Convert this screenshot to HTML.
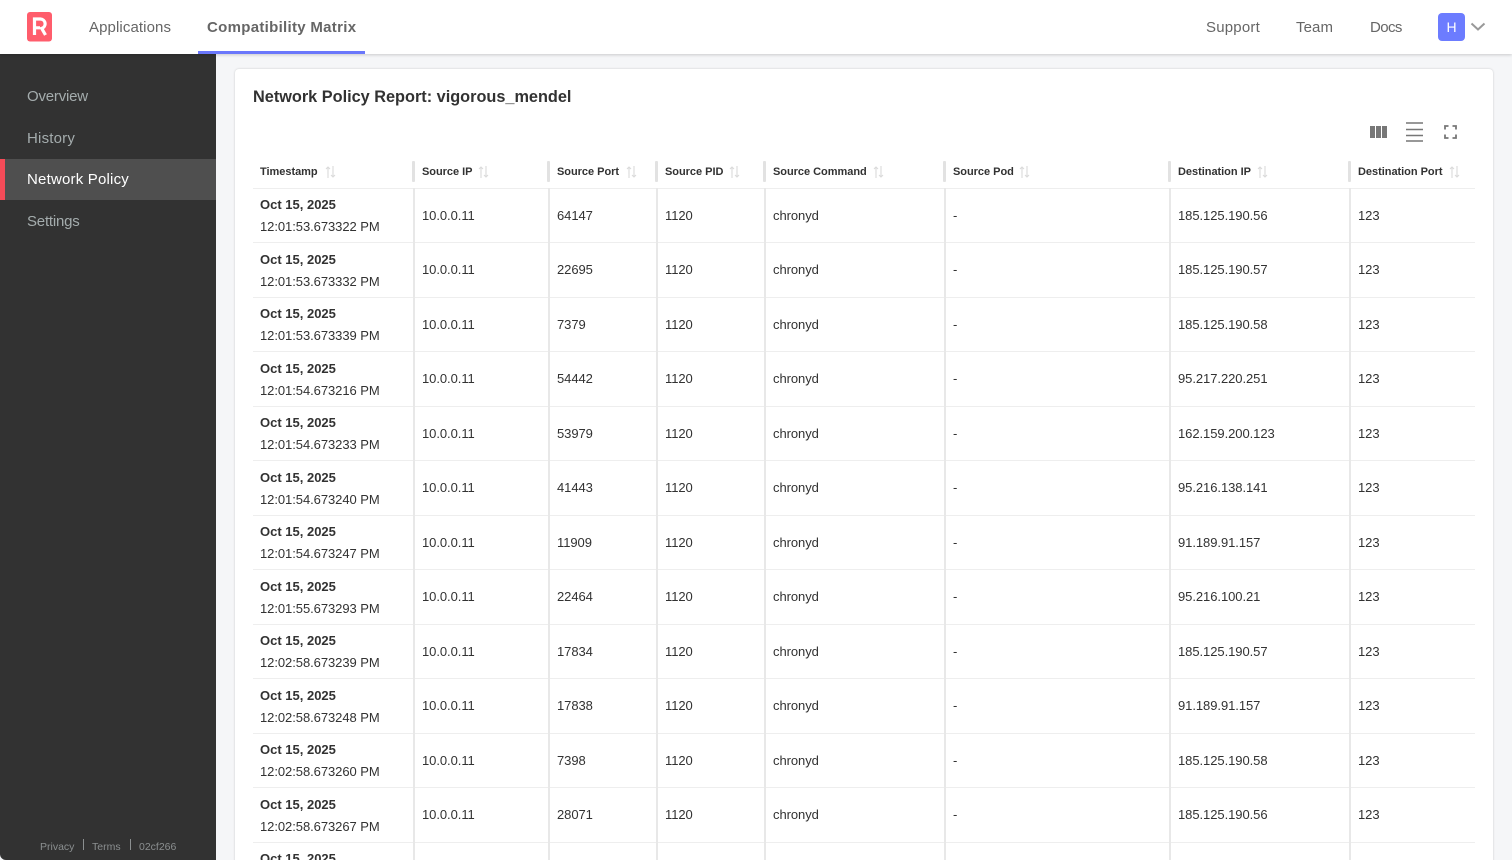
<!DOCTYPE html>
<html><head><meta charset="utf-8"><title>Network Policy</title>
<style>
*{box-sizing:border-box}
html,body{margin:0;padding:0;width:1512px;height:860px;overflow:hidden;background:#f5f6f8;font-family:"Liberation Sans",sans-serif;color:#323232}
#wrap{position:absolute;left:0;top:0;width:1512px;height:860px;overflow:hidden;background:#f5f6f8}
.a{position:absolute;white-space:nowrap}
#top{position:absolute;left:0;top:0;width:1512px;height:54px;background:#fff;box-shadow:0 1px 3px rgba(0,0,0,.18);z-index:5}
.n{position:absolute;top:18px;font-size:15px;line-height:20px;color:#666;white-space:nowrap}
#side{position:absolute;left:0;top:54px;width:216px;height:806px;background:#323232;border-bottom-left-radius:6px}
.s{position:absolute;left:27px;font-size:15px;line-height:20px;color:#a4acad}
#card{position:absolute;left:235px;top:69px;width:1258px;height:830px;background:#fff;border-radius:4px;box-shadow:0 0 2px rgba(0,0,0,.18)}
.h{position:absolute;top:166px;font-size:11px;line-height:13px;font-weight:bold;color:#323232;white-space:nowrap;letter-spacing:-.03px}
.gr{position:absolute;top:161px;width:3px;height:21px;background:#e2e2e2;border-radius:1px}
.r{position:absolute;left:253px;width:1222px;height:55px;border-bottom:1px solid #eeeeee}
.r span{position:absolute;top:19.75px;font-size:13px;line-height:15px;white-space:nowrap;color:#323232;letter-spacing:-.06px}
.r span.d{left:7px;top:9px;font-weight:bold;letter-spacing:0}
.r span.t{left:7px;top:31px}
.c2{left:169px}.c3{left:304px}.c4{left:412px}.c5{left:520px}.c6{left:700px}.c7{left:925px}.c8{left:1105px}
.v{position:absolute;top:188px;width:2px;height:672px;background:#e8e8e8}
.ic{position:absolute;top:166px}
</style></head><body>
<div id="wrap">
<div id="top">
<svg class="a" style="left:27px;top:12px" width="26" height="30" viewBox="0 0 26 30"><rect width="25" height="29.5" rx="3" fill="#ff5d6c"/><path d="M7.5 23V7h6a4.8 4.8 0 0 1 1.2 9.4L18.500 23M7.500 15.800h5.500" fill="none" stroke="#fff" stroke-width="3.200"/></svg>
<div class="n" style="left:89px;letter-spacing:.1px">Applications</div>
<div class="n" style="left:207px;font-weight:bold;letter-spacing:.3px">Compatibility Matrix</div>
<div class="a" style="left:198px;top:51px;width:167px;height:3px;background:#6a77fb"></div>
<div class="n" style="left:1206px;letter-spacing:.2px">Support</div>
<div class="n" style="left:1296px;letter-spacing:.1px">Team</div>
<div class="n" style="left:1370px;letter-spacing:-.6px">Docs</div>
<div class="a" style="left:1438px;top:13px;width:27px;height:28px;background:#6c7cff;border-radius:4px;color:#fff;font-size:14px;line-height:28px;text-align:center">H</div>
<svg class="a" style="left:1470px;top:22px" width="16" height="10" viewBox="0 0 16 10"><path d="M1.500 1.500L8 7.500L14.500 1.500" fill="none" stroke="#999" stroke-width="2"/></svg>
</div>
<div id="side">
<div class="s" style="top:33px;letter-spacing:-.2px">Overview</div>
<div class="s" style="top:75px;letter-spacing:.2px">History</div>
<div class="a" style="left:0;top:105px;width:216px;height:41px;background:#4f4f4f"></div>
<div class="a" style="left:0;top:105px;width:5px;height:41px;background:#f44b58"></div>
<div class="s" style="top:116px;color:#fff;letter-spacing:.2px">Network Policy</div>
<div class="s" style="top:158px;letter-spacing:-.2px">Settings</div>
<div class="a" style="left:40px;top:787px;font-size:10.5px;line-height:13px;color:#8b8f90">Privacy</div>
<div class="a" style="left:83px;top:785px;width:1px;height:11px;background:#8b8f90"></div>
<div class="a" style="left:92px;top:787px;font-size:10.5px;line-height:13px;color:#8b8f90">Terms</div>
<div class="a" style="left:130px;top:785px;width:1px;height:11px;background:#8b8f90"></div>
<div class="a" style="left:139px;top:787px;font-size:10.5px;line-height:13px;color:#8b8f90">02cf266</div>
</div>
<div id="card"></div>
<div class="a" style="left:253px;top:87px;font-size:16.3px;line-height:21px;font-weight:bold;color:#323232">Network Policy Report: vigorous_mendel</div>
<svg class="a" style="left:1370px;top:126px" width="17" height="12" viewBox="0 0 17 12"><path d="M0 0h5v12H0zM6 0h5v12H6zM12 0h5v12h-5z" fill="#777"/></svg>
<svg class="a" style="left:1405px;top:122px" width="18" height="20" viewBox="0 0 18 20"><path d="M1 1h17M1 7.500h17M1 13.500h17M1 19h17" fill="none" stroke="#777" stroke-width="1.600"/></svg>
<svg class="a" style="left:1444px;top:125px" width="13" height="14" viewBox="0 0 13 14"><path d="M1 4.500V1h3.500M8.500 1H12v3.500M12 9.500V13H8.500M4.500 13H1V9.500" fill="none" stroke="#777" stroke-width="1.800"/></svg>

<div class="a" style="left:253px;top:188px;width:1222px;height:1px;background:#eeeeee"></div>
<div class="h" style="left:260px">Timestamp</div><div class="h" style="left:422px">Source IP</div><div class="h" style="left:557px">Source Port</div><div class="h" style="left:665px">Source PID</div><div class="h" style="left:773px">Source Command</div><div class="h" style="left:953px">Source Pod</div><div class="h" style="left:1178px">Destination IP</div><div class="h" style="left:1358px">Destination Port</div>
<div class="gr" style="left:412px"></div><div class="gr" style="left:547px"></div><div class="gr" style="left:655px"></div><div class="gr" style="left:763px"></div><div class="gr" style="left:943px"></div><div class="gr" style="left:1168px"></div><div class="gr" style="left:1348px"></div>

<svg class="ic" style="left:325px" width="11" height="12" viewBox="0 0 11 12"><path d="M3 12V1M1 3L3 1l2 2M8 0v11M6 9l2 2 2-2" fill="none" stroke="#dadada" stroke-width="1.100"/></svg>
<svg class="ic" style="left:478px" width="11" height="12" viewBox="0 0 11 12"><path d="M3 12V1M1 3L3 1l2 2M8 0v11M6 9l2 2 2-2" fill="none" stroke="#dadada" stroke-width="1.100"/></svg>
<svg class="ic" style="left:626px" width="11" height="12" viewBox="0 0 11 12"><path d="M3 12V1M1 3L3 1l2 2M8 0v11M6 9l2 2 2-2" fill="none" stroke="#dadada" stroke-width="1.100"/></svg>
<svg class="ic" style="left:729px" width="11" height="12" viewBox="0 0 11 12"><path d="M3 12V1M1 3L3 1l2 2M8 0v11M6 9l2 2 2-2" fill="none" stroke="#dadada" stroke-width="1.100"/></svg>
<svg class="ic" style="left:873px" width="11" height="12" viewBox="0 0 11 12"><path d="M3 12V1M1 3L3 1l2 2M8 0v11M6 9l2 2 2-2" fill="none" stroke="#dadada" stroke-width="1.100"/></svg>
<svg class="ic" style="left:1019px" width="11" height="12" viewBox="0 0 11 12"><path d="M3 12V1M1 3L3 1l2 2M8 0v11M6 9l2 2 2-2" fill="none" stroke="#dadada" stroke-width="1.100"/></svg>
<svg class="ic" style="left:1257px" width="11" height="12" viewBox="0 0 11 12"><path d="M3 12V1M1 3L3 1l2 2M8 0v11M6 9l2 2 2-2" fill="none" stroke="#dadada" stroke-width="1.100"/></svg>
<svg class="ic" style="left:1449px" width="11" height="12" viewBox="0 0 11 12"><path d="M3 12V1M1 3L3 1l2 2M8 0v11M6 9l2 2 2-2" fill="none" stroke="#dadada" stroke-width="1.100"/></svg>

<div class="r" style="top:188px"><span class="d">Oct 15, 2025</span><span class="t">12:01:53.673322 PM</span><span class="c2">10.0.0.11</span><span class="c3">64147</span><span class="c4">1120</span><span class="c5">chronyd</span><span class="c6">-</span><span class="c7">185.125.190.56</span><span class="c8">123</span></div>
<div class="r" style="top:242.5px"><span class="d">Oct 15, 2025</span><span class="t">12:01:53.673332 PM</span><span class="c2">10.0.0.11</span><span class="c3">22695</span><span class="c4">1120</span><span class="c5">chronyd</span><span class="c6">-</span><span class="c7">185.125.190.57</span><span class="c8">123</span></div>
<div class="r" style="top:297px"><span class="d">Oct 15, 2025</span><span class="t">12:01:53.673339 PM</span><span class="c2">10.0.0.11</span><span class="c3">7379</span><span class="c4">1120</span><span class="c5">chronyd</span><span class="c6">-</span><span class="c7">185.125.190.58</span><span class="c8">123</span></div>
<div class="r" style="top:351.5px"><span class="d">Oct 15, 2025</span><span class="t">12:01:54.673216 PM</span><span class="c2">10.0.0.11</span><span class="c3">54442</span><span class="c4">1120</span><span class="c5">chronyd</span><span class="c6">-</span><span class="c7">95.217.220.251</span><span class="c8">123</span></div>
<div class="r" style="top:406px"><span class="d">Oct 15, 2025</span><span class="t">12:01:54.673233 PM</span><span class="c2">10.0.0.11</span><span class="c3">53979</span><span class="c4">1120</span><span class="c5">chronyd</span><span class="c6">-</span><span class="c7">162.159.200.123</span><span class="c8">123</span></div>
<div class="r" style="top:460.5px"><span class="d">Oct 15, 2025</span><span class="t">12:01:54.673240 PM</span><span class="c2">10.0.0.11</span><span class="c3">41443</span><span class="c4">1120</span><span class="c5">chronyd</span><span class="c6">-</span><span class="c7">95.216.138.141</span><span class="c8">123</span></div>
<div class="r" style="top:515px"><span class="d">Oct 15, 2025</span><span class="t">12:01:54.673247 PM</span><span class="c2">10.0.0.11</span><span class="c3">11909</span><span class="c4">1120</span><span class="c5">chronyd</span><span class="c6">-</span><span class="c7">91.189.91.157</span><span class="c8">123</span></div>
<div class="r" style="top:569.5px"><span class="d">Oct 15, 2025</span><span class="t">12:01:55.673293 PM</span><span class="c2">10.0.0.11</span><span class="c3">22464</span><span class="c4">1120</span><span class="c5">chronyd</span><span class="c6">-</span><span class="c7">95.216.100.21</span><span class="c8">123</span></div>
<div class="r" style="top:624px"><span class="d">Oct 15, 2025</span><span class="t">12:02:58.673239 PM</span><span class="c2">10.0.0.11</span><span class="c3">17834</span><span class="c4">1120</span><span class="c5">chronyd</span><span class="c6">-</span><span class="c7">185.125.190.57</span><span class="c8">123</span></div>
<div class="r" style="top:678.5px"><span class="d">Oct 15, 2025</span><span class="t">12:02:58.673248 PM</span><span class="c2">10.0.0.11</span><span class="c3">17838</span><span class="c4">1120</span><span class="c5">chronyd</span><span class="c6">-</span><span class="c7">91.189.91.157</span><span class="c8">123</span></div>
<div class="r" style="top:733px"><span class="d">Oct 15, 2025</span><span class="t">12:02:58.673260 PM</span><span class="c2">10.0.0.11</span><span class="c3">7398</span><span class="c4">1120</span><span class="c5">chronyd</span><span class="c6">-</span><span class="c7">185.125.190.58</span><span class="c8">123</span></div>
<div class="r" style="top:787.5px"><span class="d">Oct 15, 2025</span><span class="t">12:02:58.673267 PM</span><span class="c2">10.0.0.11</span><span class="c3">28071</span><span class="c4">1120</span><span class="c5">chronyd</span><span class="c6">-</span><span class="c7">185.125.190.56</span><span class="c8">123</span></div>
<div class="r" style="top:842px;border:0"><span class="d">Oct 15, 2025</span></div>

<div class="v" style="left:413px"></div><div class="v" style="left:548px"></div><div class="v" style="left:656px"></div><div class="v" style="left:764px"></div><div class="v" style="left:944px"></div><div class="v" style="left:1169px"></div><div class="v" style="left:1349px"></div>
</div>
</body></html>
